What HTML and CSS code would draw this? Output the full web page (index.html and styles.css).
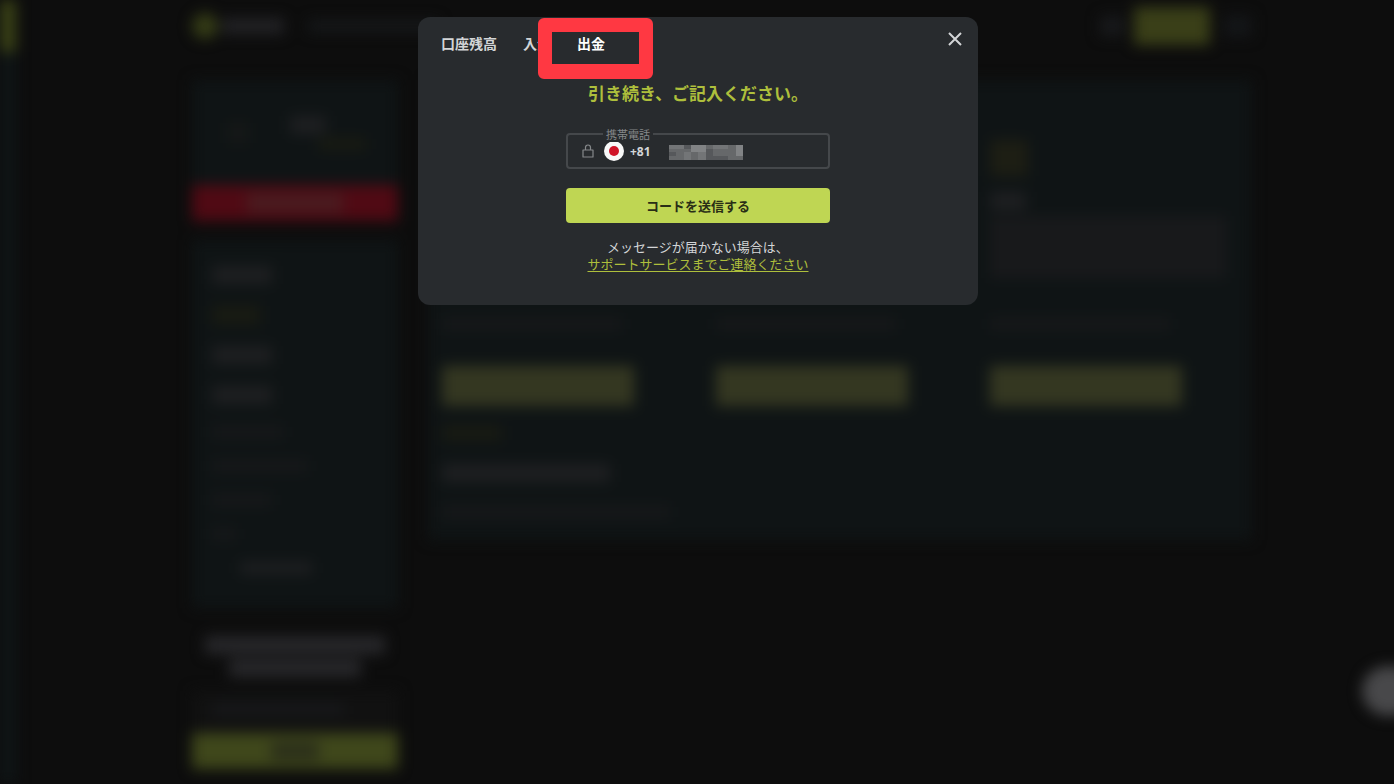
FILE: index.html
```html
<!DOCTYPE html>
<html lang="ja">
<head>
<meta charset="utf-8">
<meta name="viewport" content="width=device-width, initial-scale=1">
<title>出金</title>
<link rel="stylesheet" href="styles.css">
</head>
<body>
<div class="backdrop" aria-hidden="true">
  <div class="rail"><div class="rail-top"></div><div class="rail-body"></div></div>
  <div class="site">
    <div class="topbar">
      <div class="logo-dot"></div><div class="logo-word"></div><div class="topnav"></div>
      <div class="top-balance"></div><div class="top-deposit"></div><div class="top-user"></div>
    </div>
    <div class="columns">
      <div class="sidebar">
        <div class="profile"><div class="avatar"></div><div class="profile-info"><i class="bar bright w36"></i><i class="bar thin olive w48 indent"></i></div></div>
        <div class="red-button"><i class="bar rose w96"></i></div>
        <div class="side-menu">
          <i class="bar bright w60"></i>
          <i class="bar olive w48"></i>
          <i class="bar bright w60"></i>
          <i class="bar bright w60"></i>
          <i class="bar thin w72"></i>
          <i class="bar thin w96"></i>
          <i class="bar thin w60"></i>
          <i class="bar thin w24"></i>
          <i class="bar bright thin w72 indent"></i>
        </div>
        <div class="promo"><i class="bar strong w180"></i><i class="bar strong w132"></i></div>
        <div class="promo-field"><i class="bar thin w132"></i></div>
        <div class="promo-button"><i class="bar shade w48"></i></div>
      </div>
      <div class="panel">
        <div class="offers">
          <div class="offer"><i class="bar thin w180"></i><div class="offer-button"></div></div>
          <div class="offer"><i class="bar thin w180"></i><div class="offer-button"></div></div>
          <div class="offer">
            <i class="offer-icon"></i><i class="bar bright w36"></i>
            <div class="offer-text"></div>
            <i class="bar thin w180"></i><div class="offer-button"></div>
          </div>
        </div>
        <div class="panel-foot"><i class="bar olive w60"></i><i class="bar bright w168"></i><i class="bar thin w228"></i></div>
      </div>
    </div>
  </div>
  <div class="chat-bubble"></div>
</div>

<main class="overlay">
  <section class="modal" role="dialog" aria-modal="true" aria-labelledby="modal-title">
    <header class="modal-head">
      <nav class="tabs">
        <button class="tab" type="button">口座残高</button>
        <button class="tab" type="button">入金</button>
        <button class="tab tab-active" type="button">出金</button>
      </nav>
      <button class="close" type="button" aria-label="閉じる">
        <svg width="14" height="14" viewBox="0 0 14 14"><path d="M1 1L13 13M13 1L1 13" fill="none" stroke="currentColor" stroke-width="2"/></svg>
      </button>
    </header>
    <form class="form">
      <h1 class="title" id="modal-title">引き続き、ご記入ください。</h1>
      <div class="field">
        <label class="field-label" for="phone">携帯電話</label>
        <svg class="lock" width="12" height="14" viewBox="0 0 12 14"><path d="M1 6h10v7H1zM3.500 6V3.500a2.500 2.500 0 0 1 5 0V6" fill="none" stroke="currentColor" stroke-width="1.200" stroke-linejoin="round"/></svg>
        <svg class="flag" width="20" height="20" viewBox="0 0 20 20"><circle cx="10" cy="10" r="10" fill="#f8f8f8"/><circle cx="10" cy="10" r="5" fill="#d01428"/></svg>
        <span class="code">+81</span>
        <div class="number">
          <input class="phone" id="phone" type="tel" readonly>
          <svg class="mosaic" width="74" height="15" viewBox="0 0 74 15" shape-rendering="crispEdges">
            <rect width="74" height="15" fill="#66686a"/>
            <path fill="#818385" d="M22 0h15v7H22zM67 0h7v11h-7z"/>
            <path fill="#737577" d="M0 0h15v4H0zM15 7h7v8h-7zM44 0h15v4H44zM29 7h8v8h-8z"/>
            <path fill="#56585b" d="M0 7h7v4H0zM37 4h7v11h-7zM44 11h15v4H44zM15 0h7v4h-7z"/>
          </svg>
        </div>
      </div>
      <button class="submit" type="button">コードを送信する</button>
      <p class="note">メッセージが届かない場合は、<br><a class="support" href="#">サポートサービスまでご連絡ください</a></p>
    </form>
  </section>
</main>
</body>
</html>
```
FILE: styles.css
```css
*, *::before, *::after { box-sizing: border-box; }
body {
  margin: 0;
  min-height: 100vh;
  background: #0d0d0d;
  color: #d3d5d7;
  font-family: "Open Sans", "Noto Sans CJK JP", sans-serif;
  font-size: 13px;
  overflow: hidden;
}
button, input { font: inherit; color: inherit; }

/* Dimmed page behind the dialog */
.backdrop {
  position: fixed;
  inset: 0;
  display: grid;
  grid-template-columns: 16px minmax(0, 1fr);
  filter: blur(7px);
}
.rail { display: flex; flex-direction: column; }
.rail-top { height: 52px; background: #3a4216; }
.rail-body { flex: 1; background: #0f1516; }
.site {
  display: grid;
  grid-template-columns: 176fr minmax(0, 1060px) 142fr;
  grid-template-rows: 52px auto;
  row-gap: 28px;
}
.topbar, .columns { grid-column: 2; }
.topbar { display: flex; align-items: center; }
.logo-dot { width: 26px; height: 26px; border-radius: 50%; background: #343b16; }
.logo-word { width: 62px; height: 16px; margin-left: 4px; background: #222225; }
.topnav { width: 130px; height: 12px; margin-left: 24px; background: #16181a; }
.top-balance { width: 24px; height: 20px; margin-left: auto; background: #18191b; }
.top-deposit { width: 76px; height: 38px; margin: 0 14px 0 10px; background: #3a3f18; }
.top-user { width: 28px; height: 22px; background: #141618; }
.columns { display: grid; grid-template-columns: 206px minmax(0, 1fr); gap: 30px; align-items: start; }
.bar { display: block; height: 18px; background: #17181a; }
.thin { height: 12px; }
.bright { background: #1e1f21; }
.strong { background: #27272a; }
.olive { background: #191b12; }
.rose { background: #491c20; }
.shade { background: #2b2f1a; }
.w24 { width: 24px; }
.w36 { width: 36px; }
.w48 { width: 48px; }
.w60 { width: 60px; }
.w72 { width: 72px; }
.w96 { width: 96px; }
.w132 { width: 132px; }
.w168 { width: 168px; }
.w180 { width: 180px; }
.w228 { width: 228px; }
.indent { margin-left: 28px; }
.profile { display: flex; align-items: center; gap: 42px; height: 105px; padding-left: 36px; background: #0f1415; }
.avatar { width: 20px; height: 20px; background: #161817; }
.profile-info { display: flex; flex-direction: column; gap: 4px; }
.red-button, .promo-button { display: flex; align-items: center; justify-content: center; height: 36px; }
.red-button { background: #500a14; }
.side-menu { display: flex; flex-direction: column; gap: 22px; height: 368px; margin-top: 19px; padding: 26px 20px; background: #0f1415; }
.promo { display: flex; flex-direction: column; align-items: center; gap: 5px; margin-top: 28px; }
.promo-field { height: 42px; margin-top: 14px; padding: 12px 20px; background: #111111; }
.promo-button { background: #3f471b; }
.panel { display: flex; flex-direction: column; gap: 20px; height: 460px; padding: 60px 16px 20px 14px; background: #0f1415; }
.offers { display: grid; grid-template-columns: repeat(3, 192px); column-gap: 82px; align-items: end; }
.offer { display: flex; flex-direction: column; }
.offer-icon { width: 38px; height: 36px; background: #1d1e14; }
.offer-icon + .bar { margin-top: 16px; }
.offer-text { width: 236px; height: 62px; margin: 6px 0 40px; background: #18191b; }
.offer-button { height: 40px; margin-top: 36px; background: #343721; }
.panel-foot { display: flex; flex-direction: column; gap: 24px; }
.panel-foot .olive { height: 14px; }
.chat-bubble { position: absolute; right: -22px; top: 666px; width: 54px; height: 50px; border-radius: 50%; background: #48484a; }

/* Dialog */
.overlay { position: relative; display: flex; justify-content: center; padding: 17px 16px; }
.modal { width: 100%; max-width: 560px; margin-left: 2px; padding-bottom: 32px; border-radius: 12px; background: #282b2e; }
.modal-head { display: flex; align-items: flex-start; justify-content: space-between; padding: 12px 15px 0 23px; }
.tabs { display: flex; gap: 26px; padding-top: 5px; }
.tab, .close { padding: 0; border: 0; background: none; cursor: pointer; }
.tab { font-size: 14px; font-weight: 700; line-height: 20px; white-space: nowrap; }
.tab-active { position: relative; color: #fff; }
.tab-active::after {
  content: "";
  position: absolute;
  left: -39px;
  top: -16px;
  width: 115px;
  height: 61px;
  border: solid #ff3842;
  border-width: 14px 14px 15px;
  border-radius: 6px;
}
.close { display: flex; align-items: center; justify-content: center; width: 16px; height: 20px; }
.form { display: flex; flex-direction: column; align-items: center; width: 100%; max-width: 264px; margin: 27px auto 0; }
.title { margin: 0; color: #aebf3c; font-size: 17px; font-weight: 700; line-height: 26px; white-space: nowrap; }
.field {
  position: relative;
  display: flex;
  align-items: center;
  width: 100%;
  height: 36px;
  margin-top: 26px;
  padding: 0 10px 0 14px;
  border: 2px solid #45484b;
  border-radius: 4px;
}
.field-label {
  position: absolute;
  top: -7px;
  left: 35px;
  padding: 0 3px;
  background: #282b2e;
  color: #85888a;
  font-size: 11px;
  line-height: 14px;
}
.lock { color: #85888a; }
.flag { margin-left: 10px; }
.code { margin-left: 6px; font-size: 12px; font-weight: 700; }
.number { position: relative; flex: 1; min-width: 0; height: 24px; margin-left: 18px; }
.phone { width: 100%; height: 24px; padding: 0; border: 0; background: none; outline: 0; }
.mosaic { position: absolute; left: 0; top: 6px; }
.submit {
  width: 100%;
  height: 35px;
  margin-top: 19px;
  padding: 0;
  border: 0;
  border-radius: 4px;
  background: #bfd653;
  color: #292e16;
  font-weight: 700;
  cursor: pointer;
}
.note { margin: 16px 0 0; line-height: 17px; text-align: center; white-space: nowrap; }
.support { color: #aebf3c; text-underline-offset: 2px; }
```
